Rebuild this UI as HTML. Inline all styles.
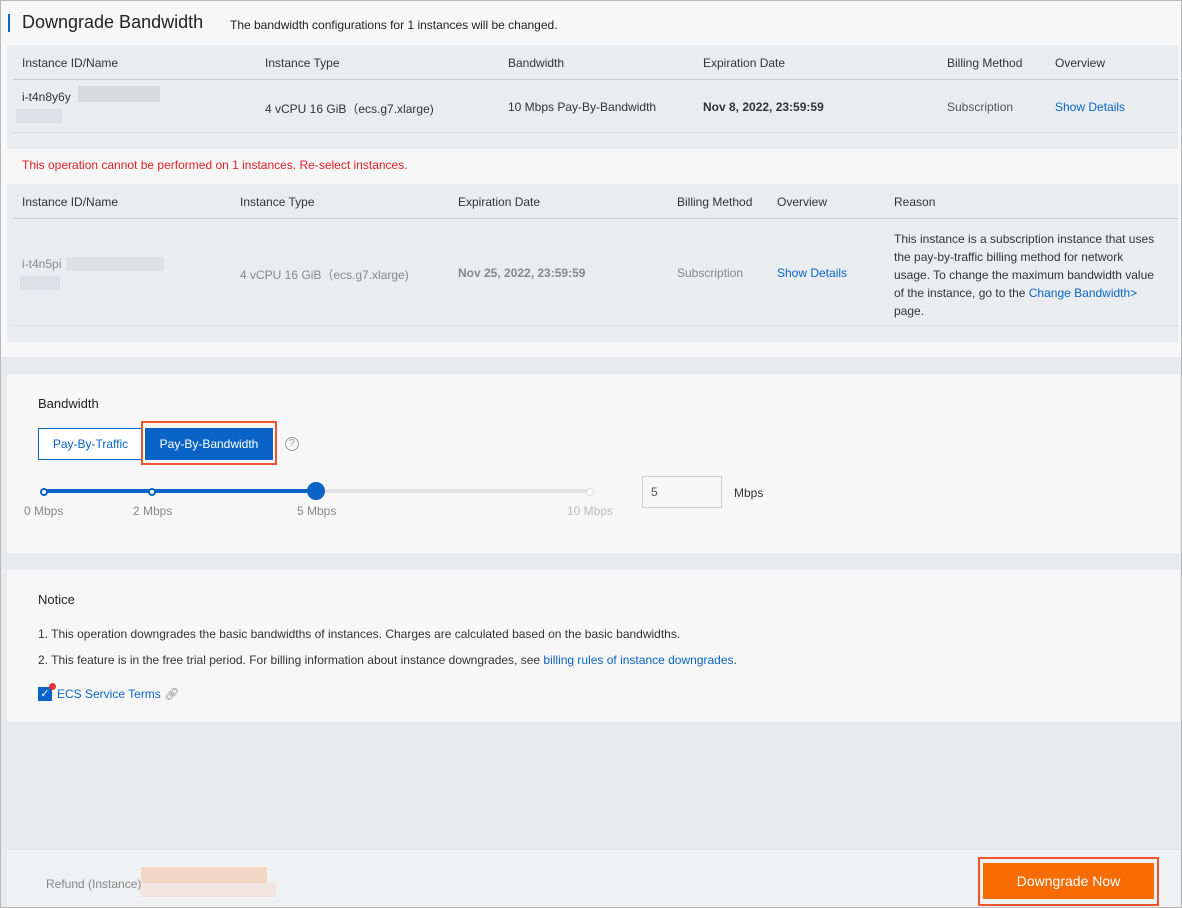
<!DOCTYPE html>
<html><head><meta charset="utf-8"><style>
*{box-sizing:border-box;margin:0;padding:0}
body{width:1182px;height:908px;overflow:hidden;background:#e9eaed;font-family:"Liberation Sans",sans-serif;font-size:12px;color:#333;position:relative}
.a{position:absolute;white-space:nowrap}
.frame{position:absolute;left:0;top:0;width:1182px;height:908px;border:1px solid #b8b8b8;pointer-events:none}
.bl{color:#0a64c8}
.g{color:#888}
</style></head><body>
<div class="a" style="left:1px;top:1px;width:1180px;height:356px;background:#f7f7f7"></div>
<div class="a" style="left:8px;top:14px;width:2px;height:18px;background:#0a64c8"></div>
<div class="a" style="left:22px;top:12px;font-size:18px;color:#222">Downgrade Bandwidth</div>
<div class="a" style="left:230px;top:18px;color:#222">The bandwidth configurations for 1 instances will be changed.</div>

<div class="a" style="left:7px;top:45px;width:1171px;height:104px;background:#e9edf0"></div>
<div class="a" style="left:13px;top:79px;width:1165px;height:1px;background:#c9ccd0"></div>
<div class="a" style="left:13px;top:132px;width:1165px;height:1px;background:#dcdfe2"></div>
<div class="a" style="left:22px;top:56px">Instance ID/Name</div>
<div class="a" style="left:265px;top:56px">Instance Type</div>
<div class="a" style="left:508px;top:56px">Bandwidth</div>
<div class="a" style="left:703px;top:56px">Expiration Date</div>
<div class="a" style="left:947px;top:56px">Billing Method</div>
<div class="a" style="left:1055px;top:56px">Overview</div>
<div class="a" style="left:22px;top:90px">i-t4n8y6y</div>
<div class="a" style="left:78px;top:86px;width:82px;height:16px;background:#d8dadc"></div>
<div class="a" style="left:16px;top:109px;width:46px;height:14px;background:#dde0e6"></div>
<div class="a" style="left:265px;top:100px">4 vCPU 16 GiB（ecs.g7.xlarge)</div>
<div class="a" style="left:508px;top:100px">10 Mbps Pay-By-Bandwidth</div>
<div class="a" style="left:703px;top:100px;font-weight:bold">Nov 8, 2022, 23:59:59</div>
<div class="a" style="left:947px;top:100px;color:#555">Subscription</div>
<div class="a bl" style="left:1055px;top:100px">Show Details</div>

<div class="a" style="left:22px;top:158px;color:#e0202a">This operation cannot be performed on 1 instances. Re-select instances.</div>

<div class="a" style="left:7px;top:184px;width:1171px;height:158px;background:#e9edf0"></div>
<div class="a" style="left:13px;top:218px;width:1165px;height:1px;background:#c9ccd0"></div>
<div class="a" style="left:13px;top:325px;width:1165px;height:1px;background:#dcdfe2"></div>
<div class="a" style="left:22px;top:195px">Instance ID/Name</div>
<div class="a" style="left:240px;top:195px">Instance Type</div>
<div class="a" style="left:458px;top:195px">Expiration Date</div>
<div class="a" style="left:677px;top:195px">Billing Method</div>
<div class="a" style="left:777px;top:195px">Overview</div>
<div class="a" style="left:894px;top:195px">Reason</div>
<div class="a g" style="left:22px;top:257px">i-t4n5pi</div>
<div class="a" style="left:66px;top:257px;width:98px;height:14px;background:#dfe1e4"></div>
<div class="a" style="left:20px;top:276px;width:40px;height:14px;background:#dde0e4"></div>
<div class="a g" style="left:240px;top:266px">4 vCPU 16 GiB（ecs.g7.xlarge)</div>
<div class="a g" style="left:458px;top:266px;font-weight:bold">Nov 25, 2022, 23:59:59</div>
<div class="a g" style="left:677px;top:266px">Subscription</div>
<div class="a bl" style="left:777px;top:266px">Show Details</div>
<div class="a" style="left:894px;top:230px;line-height:18px;white-space:normal;width:290px">This instance is a subscription instance that uses<br>the pay-by-traffic billing method for network<br>usage. To change the maximum bandwidth value<br>of the instance, go to the <span class="bl">Change Bandwidth&gt;</span><br>page.</div>

<div class="a" style="left:7px;top:374px;width:1173px;height:179px;background:#f7f7f7"></div>
<div class="a" style="left:38px;top:396px;font-size:13px;color:#222">Bandwidth</div>
<div class="a bl" style="left:38px;top:428px;width:105px;height:32px;border:1px solid #0a64c8;background:#fff;text-align:center;line-height:30px">Pay-By-Traffic</div>
<div class="a" style="left:141px;top:421px;width:136px;height:44px;border:2px solid #f0532d"></div>
<div class="a" style="left:145px;top:428px;width:128px;height:32px;background:#0a64c8;color:#fff;text-align:center;line-height:32px">Pay-By-Bandwidth</div>
<div class="a" style="left:285px;top:437px;width:14px;height:14px;border:1px solid #999;border-radius:50%;color:#999;font-size:10px;text-align:center;line-height:12px">?</div>
<div class="a" style="left:44px;top:489px;width:546px;height:4px;background:#e2e2e2"></div>
<div class="a" style="left:44px;top:489px;width:272px;height:4px;background:#0a64c8"></div>
<div class="a" style="left:40px;top:488px;width:8px;height:8px;border:2px solid #0a64c8;background:#fff;border-radius:50%"></div>
<div class="a" style="left:148px;top:488px;width:8px;height:8px;border:2px solid #0a64c8;background:#fff;border-radius:50%"></div>
<div class="a" style="left:586px;top:488px;width:8px;height:8px;border:1px solid #ddd;background:#fff;border-radius:50%"></div>
<div class="a" style="left:307px;top:482px;width:18px;height:18px;background:#0a64c8;border-radius:50%"></div>
<div class="a g" style="left:24px;top:504px">0 Mbps</div>
<div class="a g" style="left:133px;top:504px">2 Mbps</div>
<div class="a g" style="left:297px;top:504px">5 Mbps</div>
<div class="a" style="left:567px;top:504px;color:#bbb">10 Mbps</div>
<div class="a" style="left:642px;top:476px;width:80px;height:32px;border:1px solid #ccc;background:#f7f7f7;padding-left:8px;line-height:30px;color:#555">5</div>
<div class="a" style="left:734px;top:486px;color:#333">Mbps</div>

<div class="a" style="left:7px;top:570px;width:1173px;height:152px;background:#f7f7f7"></div>
<div class="a" style="left:38px;top:592px;font-size:13px;color:#222">Notice</div>
<div class="a" style="left:38px;top:627px">1. This operation downgrades the basic bandwidths of instances. Charges are calculated based on the basic bandwidths.</div>
<div class="a" style="left:38px;top:653px">2. This feature is in the free trial period. For billing information about instance downgrades, see <span class="bl">billing rules of instance downgrades</span>.</div>
<div class="a" style="left:38px;top:687px;width:14px;height:14px;background:#0a64c8;color:#fff;font-size:11px;text-align:center;line-height:14px">✓</div>
<div class="a" style="left:49px;top:683px;width:7px;height:7px;background:#e8323c;border-radius:50%"></div>
<div class="a bl" style="left:57px;top:687px">ECS Service Terms <span style="color:#888">🔗︎</span></div>

<div class="a" style="left:7px;top:849px;width:1173px;height:58px;background:#f0f1f2;border-top:1px solid #e0e1e3"></div>
<div class="a g" style="left:46px;top:877px">Refund (Instance)</div>
<div class="a" style="left:141px;top:867px;width:126px;height:16px;background:#f2d6c6"></div>
<div class="a" style="left:141px;top:883px;width:135px;height:14px;background:#f3e6e0"></div>
<div class="a" style="left:978px;top:857px;width:181px;height:49px;border:2px solid #f0532d"></div>
<div class="a" style="left:983px;top:863px;width:171px;height:36px;background:#f66b02;color:#fff;font-size:14px;text-align:center;line-height:36px">Downgrade Now</div>
<div class="frame"></div>
</body></html>
